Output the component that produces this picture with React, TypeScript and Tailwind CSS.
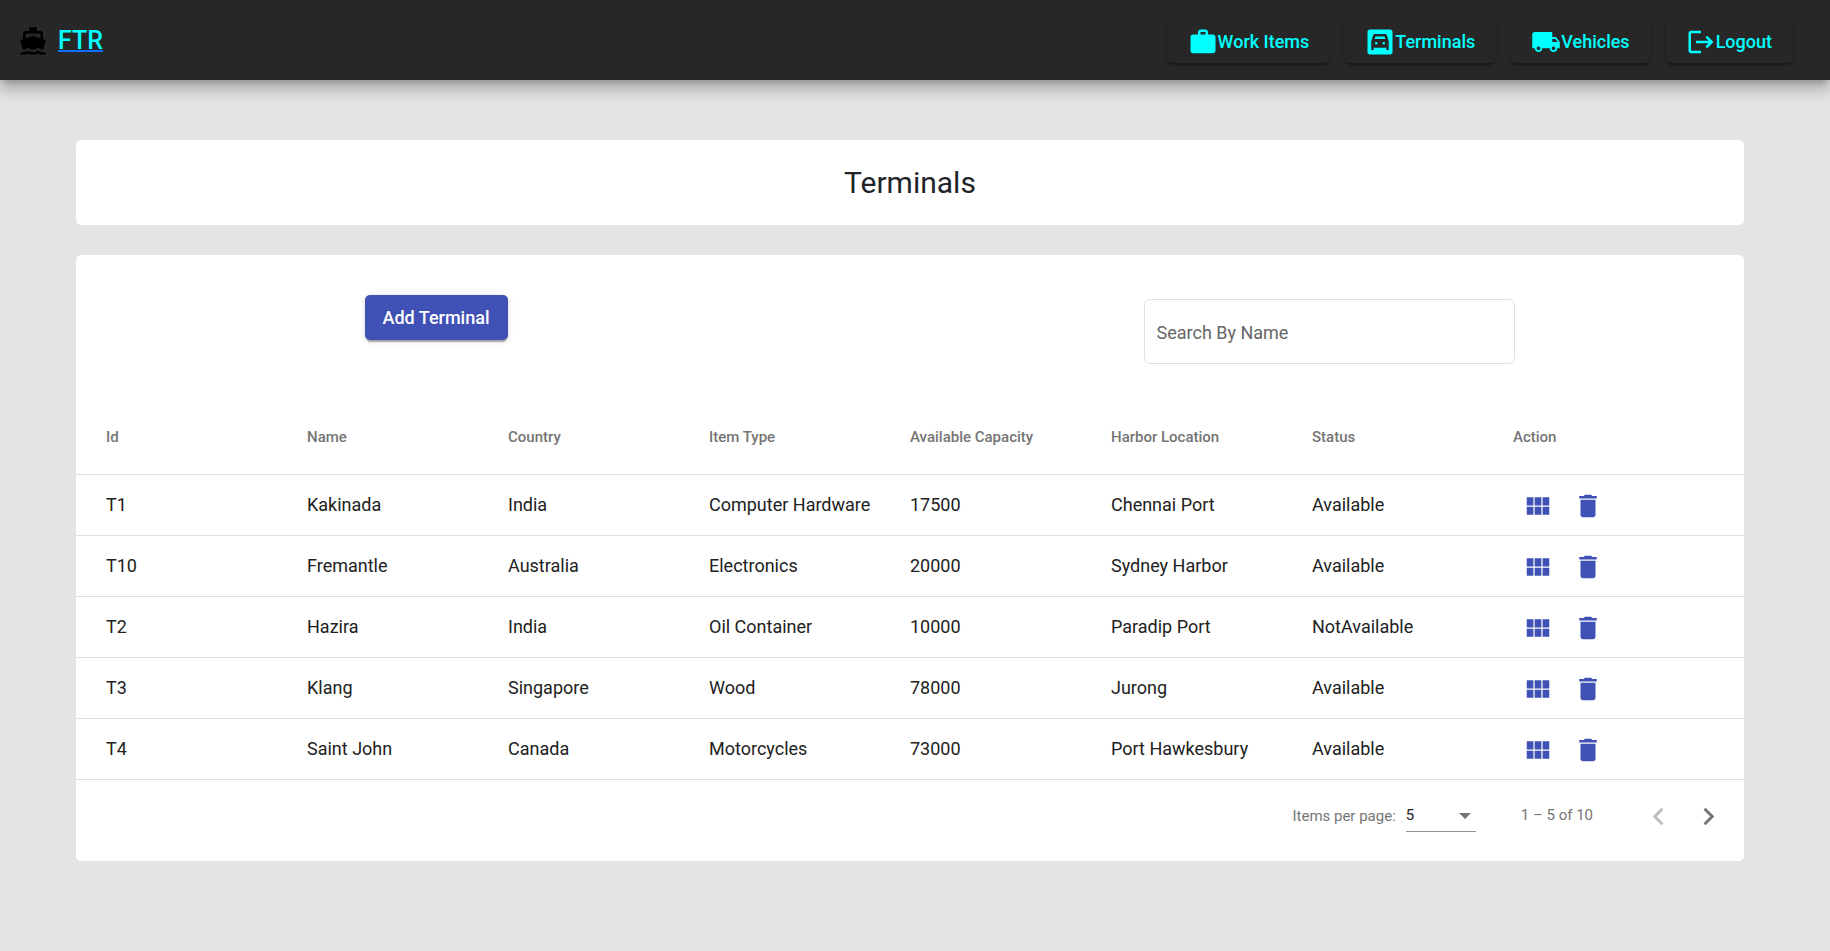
import React from "react";
import {
  MdWork,
  MdGarage,
  MdLocalShipping,
  MdLogout,
  MdDirectionsBoat,
  MdViewModule,
  MdDelete,
} from "react-icons/md";

const navItems = [
  { label: "Work Items", Icon: MdWork },
  { label: "Terminals", Icon: MdGarage },
  { label: "Vehicles", Icon: MdLocalShipping },
  { label: "Logout", Icon: MdLogout },
];

const columns = [
  "Id",
  "Name",
  "Country",
  "Item Type",
  "Available Capacity",
  "Harbor Location",
  "Status",
];

const terminals = [
  ["T1", "Kakinada", "India", "Computer Hardware", "17500", "Chennai Port", "Available"],
  ["T10", "Fremantle", "Australia", "Electronics", "20000", "Sydney Harbor", "Available"],
  ["T2", "Hazira", "India", "Oil Container", "10000", "Paradip Port", "NotAvailable"],
  ["T3", "Klang", "Singapore", "Wood", "78000", "Jurong", "Available"],
  ["T4", "Saint John", "Canada", "Motorcycles", "73000", "Port Hawkesbury", "Available"],
];

const raised =
  "shadow-[0_4px_1px_-2px_rgba(0,0,0,0.2),0_2px_2px_0_rgba(0,0,0,0.14),0_1px_6px_0_rgba(0,0,0,0.12)]";

function Header() {
  return (
    <header className="relative flex h-20 items-center justify-between bg-[#272727] pt-px pr-[38px] pl-[18px] shadow-[0_6px_6px_-4px_rgba(0,0,0,0.2),0_10px_12px_1px_rgba(0,0,0,0.14),0_4px_18px_2px_rgba(0,0,0,0.12)]">
      <div className="flex items-center gap-[10px]">
        <MdDirectionsBoat className="size-[30px] text-black" aria-hidden="true" />
        <a
          href="#home"
          className="text-[25px] leading-8 font-medium text-[#00ffff] underline decoration-[#0d6efd] decoration-2"
        >
          FTR
        </a>
      </div>
      <nav className="flex gap-4">
        {navItems.map(({ label, Icon }) => (
          <button
            key={label}
            type="button"
            className={`flex h-[45px] items-center rounded-[5px] bg-[#272727] px-5 pt-0.5 text-lg font-medium text-[#00ffff] ${raised}`}
          >
            <Icon className="size-[30px]" aria-hidden="true" />
            {label}
          </button>
        ))}
      </nav>
    </header>
  );
}

function TerminalsTable() {
  return (
    <table className="w-full table-fixed border-collapse text-left">
      <thead>
        <tr className="h-[70px] border-b border-[#e0e0e0] text-[15px] text-[#757575]">
          {columns.map((c) => (
            <th key={c} scope="col" className="p-0 pb-1 font-medium first:w-[231px] first:pl-[30px]">
              {c}
            </th>
          ))}
          <th scope="col" className="w-[231px] p-0 pb-1 font-medium">
            Action
          </th>
        </tr>
      </thead>
      <tbody>
        {terminals.map((row) => (
          <tr key={row[0]} className="h-[61px] border-b border-[#e0e0e0] text-lg text-[#212121]">
            {row.map((value, i) => (
              <td key={columns[i]} className="p-0 first:pl-[30px]">
                {value}
              </td>
            ))}
            <td className="p-0 pt-0.5">
              <div className="flex text-[#3f51b5]">
                <button
                  type="button"
                  aria-label={`View ${row[0]}`}
                  className="flex size-[50px] items-center justify-center"
                >
                  <MdViewModule className="size-[30px]" />
                </button>
                <button
                  type="button"
                  aria-label={`Delete ${row[0]}`}
                  className="flex size-[50px] items-center justify-center"
                >
                  <MdDelete className="size-[30px]" />
                </button>
              </div>
            </td>
          </tr>
        ))}
      </tbody>
    </table>
  );
}

function Paginator() {
  return (
    <div className="flex h-[81px] items-center justify-end pr-[11px] pb-2 text-[15px] text-[#757575]">
      <label htmlFor="page-size">Items per page:</label>
      <div className="relative ml-[10px] w-[70px] border-b border-[#949494]">
        <select
          id="page-size"
          defaultValue="5"
          className="h-[30px] w-full appearance-none bg-transparent text-[#212121] outline-none"
        >
          <option>5</option>
          <option>10</option>
          <option>20</option>
        </select>
        <svg
          className="pointer-events-none absolute top-3 right-[5px]"
          width="12"
          height="6"
          viewBox="0 0 12 6"
          fill="#757575"
          aria-hidden="true"
        >
          <path d="M0 0h12L6 6z" />
        </svg>
      </div>
      <span className="mr-10 ml-[45px] pb-0.5">1 – 5 of 10</span>
      <button
        type="button"
        disabled
        aria-label="Previous page"
        className="flex size-[50px] items-center justify-center text-[#bdbdbd]"
      >
        <svg className="size-[35px]" viewBox="0 0 24 24" fill="currentColor">
          <path d="M15.41 7.41L14 6l-6 6 6 6 1.41-1.41L10.83 12z" />
        </svg>
      </button>
      <button
        type="button"
        aria-label="Next page"
        className="flex size-[50px] items-center justify-center text-[#757575]"
      >
        <svg className="size-[35px]" viewBox="0 0 24 24" fill="currentColor">
          <path d="M10 6L8.59 7.41 13.17 12l-4.58 4.59L10 18l6-6z" />
        </svg>
      </button>
    </div>
  );
}

export default function App() {
  return (
    <div className="min-h-screen bg-[#e4e4e4] font-[Roboto,sans-serif]">
      <Header />
      <main className="flex flex-col gap-[30px] pt-[60px] pr-[86px] pb-10 pl-[76px]">
        <section className="rounded-[5px] bg-white py-6 text-center">
          <h1 className="text-[30px] leading-[37px] text-[#212529]">Terminals</h1>
        </section>
        <section className="rounded-[5px] bg-white">
          <div className="flex h-[149px] items-start pt-10">
            <div className="flex w-1/2 justify-center pr-[114px]">
              <button
                type="button"
                className={`h-[45px] rounded-[5px] bg-[#3f51b5] px-[18px] text-lg font-medium text-white ${raised}`}
              >
                Add Terminal
              </button>
            </div>
            <div className="flex w-1/2 justify-center pt-1 pl-1">
              <input
                type="text"
                aria-label="Search By Name"
                placeholder="Search By Name"
                className="h-[65px] w-[371px] rounded-md border border-[#e0e0e0] px-3 pt-0.5 text-lg text-[#212121] outline-none placeholder:text-[#666666]"
              />
            </div>
          </div>
          <TerminalsTable />
          <Paginator />
        </section>
      </main>
    </div>
  );
}
